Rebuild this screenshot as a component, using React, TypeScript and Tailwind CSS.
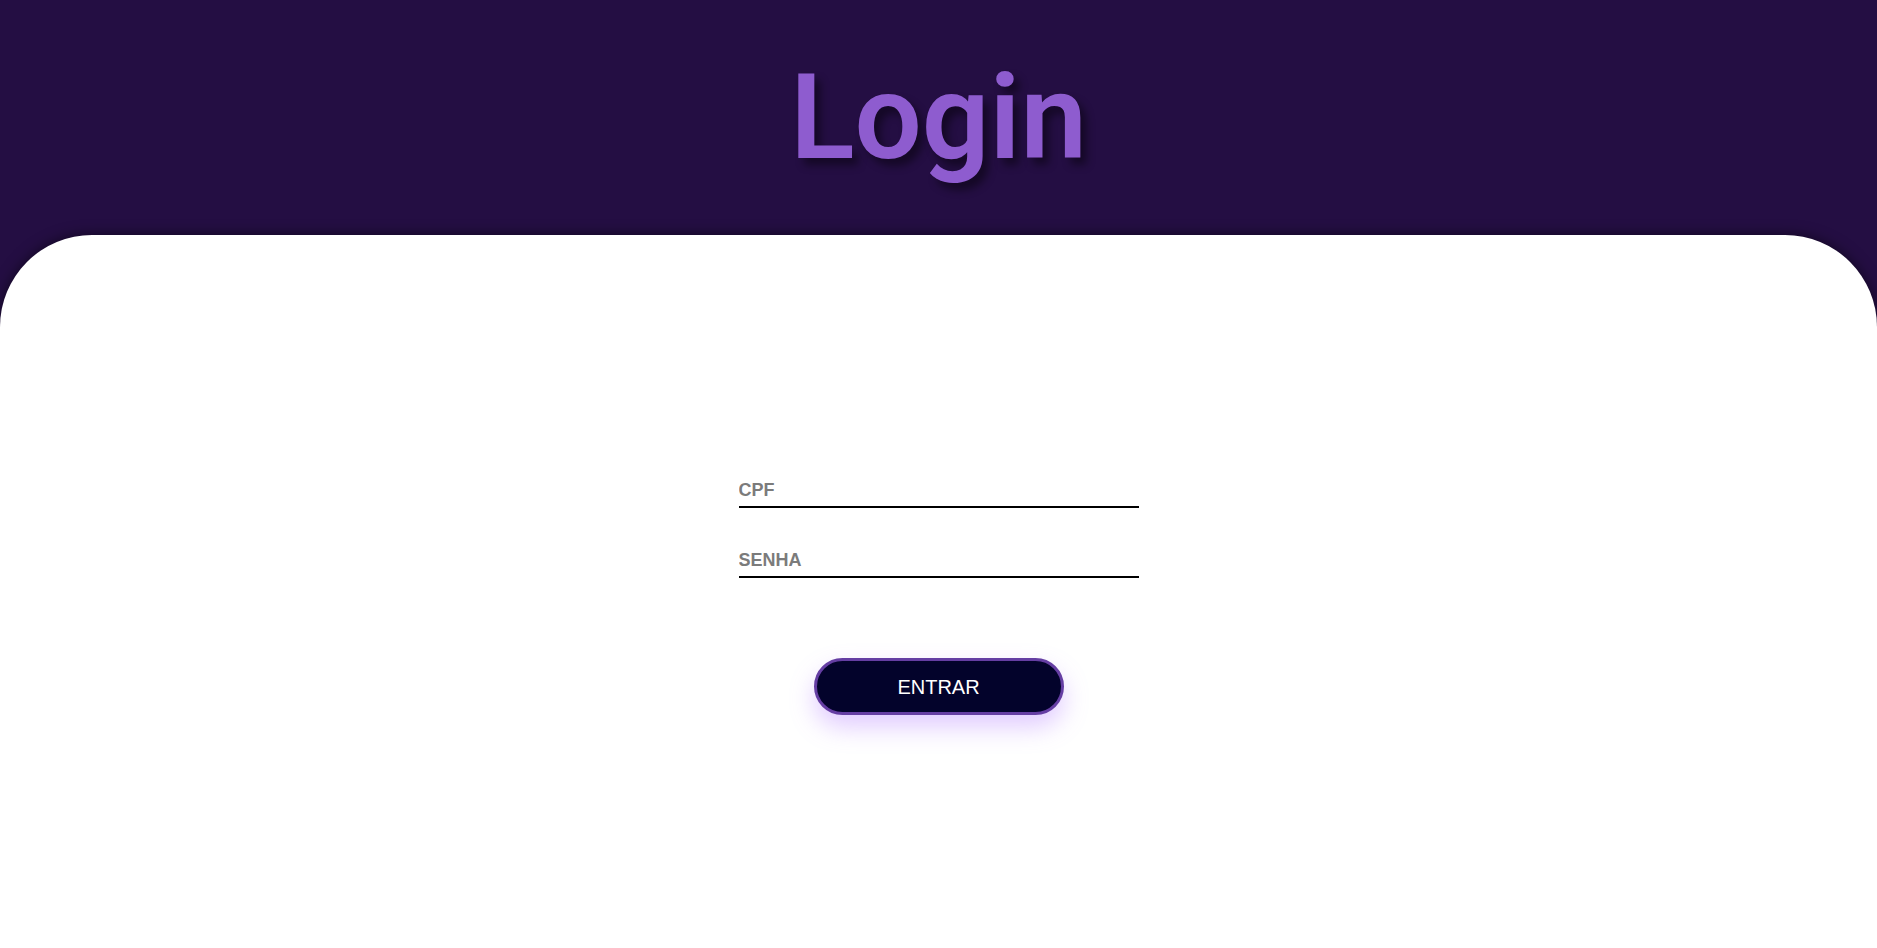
import { useState } from 'react';

export default function App() {
  const [cpf, setCpf] = useState('');
  const [senha, setSenha] = useState('');

  return (
    <div className="min-h-screen flex flex-col bg-[#240e43] overflow-hidden">
      {/* Header */}
      <header className="h-[235px] flex justify-center">
        <h1 className="mt-[47px] font-['Roboto',sans-serif] font-semibold text-[119px] leading-[1.2] text-[#8e5ccf] [text-shadow:6px_7px_8px_rgba(0,0,0,0.45)]">
          Login
        </h1>
      </header>

      {/* Painel */}
      <main className="flex-1 bg-white rounded-t-[92px] shadow-[0_0_14px_rgba(0,0,0,0.55)] flex flex-col items-center pt-[243px] font-['Liberation_Sans',Arial,sans-serif]">
        <form className="flex flex-col items-center" onSubmit={(e) => e.preventDefault()}>
          <input
            value={cpf}
            onChange={(e) => setCpf(e.target.value)}
            placeholder="CPF"
            className="w-[400px] h-[30px] pb-[3px] border-b-2 border-black bg-transparent text-[18px] font-bold text-[#333] placeholder:text-[#7b7b7b] outline-none px-0"
          />
          <input
            type="password"
            value={senha}
            onChange={(e) => setSenha(e.target.value)}
            placeholder="SENHA"
            className="mt-[40px] w-[400px] h-[30px] pb-[3px] border-b-2 border-black bg-transparent text-[18px] font-bold text-[#333] placeholder:text-[#7b7b7b] outline-none px-0"
          />
          <button
            type="submit"
            className="mt-[80px] w-[250px] h-[57px] rounded-full border-[3px] border-[#653ea3] bg-[#03032b] text-white text-[20px] shadow-[0_12px_24px_rgba(170,110,255,0.35)]"
          >
            ENTRAR
          </button>
        </form>
      </main>
    </div>
  );
}
